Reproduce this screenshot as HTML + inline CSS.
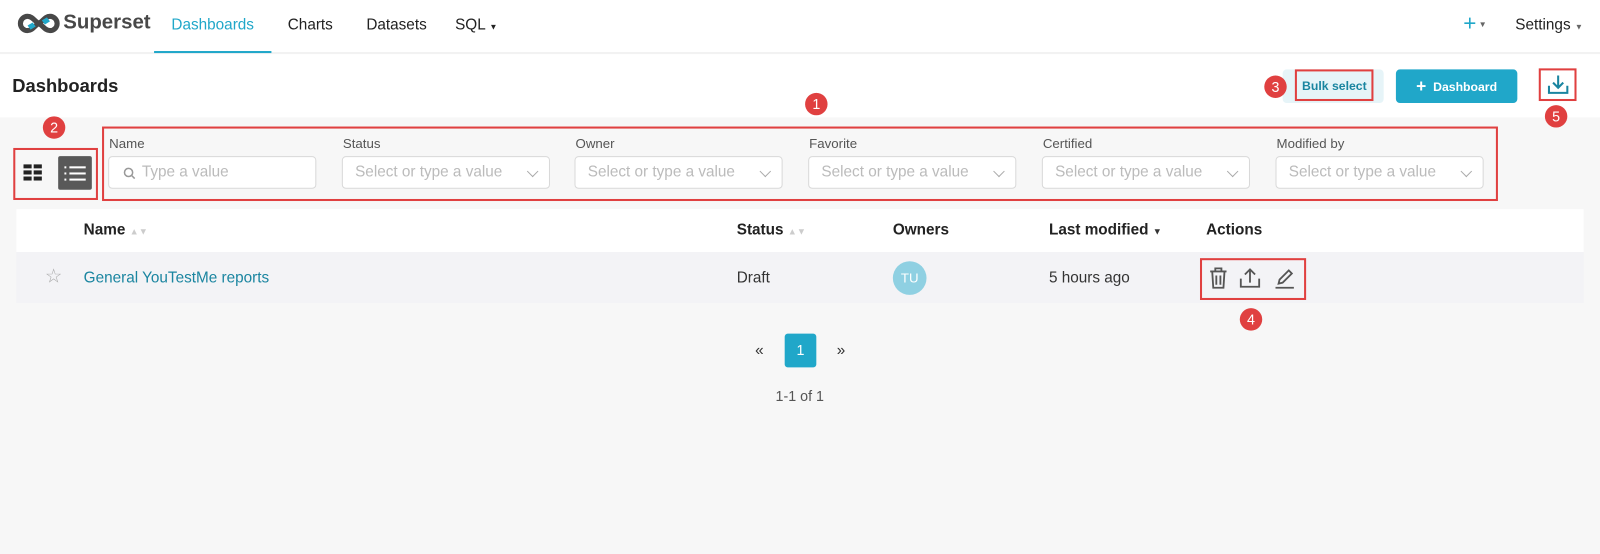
<!DOCTYPE html>
<html><head><meta charset="utf-8"><style>
*{box-sizing:border-box;margin:0;padding:0}
body{width:1600px;height:554px;background:#f7f7f7;font-family:"Liberation Sans",sans-serif;position:relative;overflow:hidden;color:#333}
#w{position:absolute;left:0;top:0;width:1568px;height:543px;transform:scale(1.0204);transform-origin:0 0}
.a{position:absolute}
.red{position:absolute;border:2px solid #e04040}
.num{position:absolute;width:22px;height:22px;border-radius:50%;background:#e04040;color:#fff;font-size:14px;text-align:center;line-height:22px}
.lab{position:absolute;top:133px;font-size:13px;color:#555}
.inp{position:absolute;top:153px;width:204px;height:32px;background:#fff;border:1px solid #d9d9d9;border-radius:4px;font-size:15px;color:#bbb;line-height:30px;padding-left:12px}
.inp .chev{position:absolute;right:12px;top:10px;width:8px;height:8px;border-right:1px solid #aaa;border-bottom:1px solid #aaa;transform:rotate(45deg)}
.th{position:absolute;top:217px;font-size:15px;font-weight:bold;color:#222}
.td{position:absolute;top:264px;font-size:15px;color:#333}
</style></head><body><div id="w">
<div class="a" style="left:0;top:0;width:1600px;height:115px;background:#fff"></div>
<div class="a" style="left:0;top:51px;width:1600px;height:2px;background:#f2f2f2"></div>
<svg class="a" style="left:16px;top:12px" width="44" height="22" viewBox="0 0 44 22"><path d="M11 4a7 7 0 1 0 0 14c5 0 7-5 11-7s6-7 11-7a7 7 0 1 1 0 14c-5 0-7-5-11-7s-6-7-11-7z" fill="none" stroke="#484848" stroke-width="5"/><path d="M25 8l5-3 3 4-5 3z" fill="#20a7c9"/><path d="M19 14l-5 3-3-4 5-3z" fill="#20a7c9"/></svg>
<div class="a" style="left:62px;top:11px;font-size:20px;font-weight:bold;color:#484848">Superset</div>
<div class="a" style="left:168px;top:16px;font-size:15px;color:#20a7c9">Dashboards</div>
<div class="a" style="left:151px;top:50px;width:115px;height:2px;background:#20a7c9"></div>
<div class="a" style="left:282px;top:16px;font-size:15px;color:#222">Charts</div>
<div class="a" style="left:359px;top:16px;font-size:15px;color:#222">Datasets</div>
<div class="a" style="left:446px;top:16px;font-size:15px;color:#222">SQL <span style="font-size:8px">▼</span></div>
<div class="a" style="left:1434px;top:10px;font-size:22px;color:#20a7c9">+<span style="font-size:8px;color:#666;vertical-align:middle"> ▼</span></div>
<div class="a" style="left:1485px;top:16px;font-size:15px;color:#222">Settings <span style="font-size:8px;color:#666">▼</span></div>
<div class="a" style="left:12px;top:74px;font-size:18px;font-weight:bold;color:#222">Dashboards</div>
<div class="a" style="left:1257px;top:68px;width:99px;height:33px;background:#e6f4f8;border-radius:4px"></div>
<div class="red" style="left:1269px;top:68px;width:77px;height:31px"></div>
<div class="a" style="left:1276px;top:77px;font-size:12px;font-weight:bold;color:#1a85a0">Bulk select</div>
<div class="num" style="left:1239px;top:74px">3</div>
<div class="a" style="left:1368px;top:68px;width:119px;height:33px;background:#20a7c9;border-radius:4px;color:#fff;font-size:12px;font-weight:bold;line-height:33px;text-align:center"><span style="font-size:17px;vertical-align:-1px">+</span>&nbsp; Dashboard</div>
<div class="red" style="left:1508px;top:67px;width:37px;height:32px"></div>
<svg class="a" style="left:1515px;top:72px" width="24" height="22" viewBox="0 0 24 22" fill="none" stroke="#1a85a0" stroke-width="2"><path d="M12 2v12M7 9l5 5 5-5M3 12v7h18v-7"/></svg>
<div class="num" style="left:1514px;top:103px">5</div>
<div class="num" style="left:789px;top:91px">1</div>
<div class="num" style="left:42px;top:114px">2</div>
<div class="red" style="left:100px;top:124px;width:1368px;height:73px"></div>
<div class="red" style="left:13px;top:145px;width:83px;height:51px"></div>
<svg class="a" style="left:23px;top:161px" width="20" height="16"><g fill="#222"><rect x="0" y="0" width="8" height="4"/><rect x="10" y="0" width="8" height="4"/><rect x="0" y="6" width="8" height="4"/><rect x="10" y="6" width="8" height="4"/><rect x="0" y="12" width="8" height="4"/><rect x="10" y="12" width="8" height="4"/></g></svg>
<div class="a" style="left:57px;top:153px;width:33px;height:33px;background:#595959;border-radius:2px"></div>
<svg class="a" style="left:63px;top:162px" width="22" height="16"><g fill="#fff"><rect x="0" y="1" width="2" height="2"/><rect x="5" y="1" width="16" height="2"/><rect x="0" y="7" width="2" height="2"/><rect x="5" y="7" width="16" height="2"/><rect x="0" y="13" width="2" height="2"/><rect x="5" y="13" width="16" height="2"/></g></svg>
<div class="lab" style="left:107px">Name</div>
<div class="lab" style="left:336px">Status</div>
<div class="lab" style="left:564px">Owner</div>
<div class="lab" style="left:793px">Favorite</div>
<div class="lab" style="left:1022px">Certified</div>
<div class="lab" style="left:1251px">Modified by</div>
<div class="inp" style="left:106px;padding-left:32px"><svg class="a" style="left:14px;top:10px" width="12" height="12" fill="none" stroke="#999" stroke-width="1.5"><circle cx="5" cy="5" r="4"/><path d="M8 8l3 3"/></svg>Type a value</div>
<div class="inp" style="left:335px">Select or type a value<i class="chev"></i></div>
<div class="inp" style="left:563px">Select or type a value<i class="chev"></i></div>
<div class="inp" style="left:792px">Select or type a value<i class="chev"></i></div>
<div class="inp" style="left:1021px">Select or type a value<i class="chev"></i></div>
<div class="inp" style="left:1250px">Select or type a value<i class="chev"></i></div>
<div class="a" style="left:16px;top:205px;width:1536px;height:42px;background:#fff"></div>
<div class="a" style="left:16px;top:247px;width:1536px;height:50px;background:#f3f3f6"></div>
<div class="th" style="left:82px">Name <span style="color:#ccc;font-size:9px">▲▼</span></div>
<div class="th" style="left:722px">Status <span style="color:#ccc;font-size:9px">▲▼</span></div>
<div class="th" style="left:875px">Owners</div>
<div class="th" style="left:1028px">Last modified <span style="color:#333;font-size:9px">▼</span></div>
<div class="th" style="left:1182px">Actions</div>
<div class="a" style="left:44px;top:260px;font-size:19px;color:#aaa">☆</div>
<div class="td" style="left:82px;color:#1a85a0">General YouTestMe reports</div>
<div class="td" style="left:722px">Draft</div>
<div class="a" style="left:875px;top:256px;width:33px;height:33px;border-radius:50%;background:#8fd0e2;color:#fff;font-size:13px;line-height:33px;text-align:center">TU</div>
<div class="td" style="left:1028px">5 hours ago</div>
<div class="red" style="left:1176px;top:253px;width:104px;height:41px"></div>
<svg class="a" style="left:1183px;top:261px" width="90" height="24" fill="none" stroke="#555" stroke-width="1.8">
<path d="M3 5h16M8 5V2h6v3M5 5l1 16h10l1-16M9 9v9M13 9v9"/>
<path d="M33 12v8h18v-8M42 16V3M37 8l5-5 5 5"/>
<path d="M67 21h18M70 17l1-4 9-9 3 3-9 9z"/>
</svg>
<div class="num" style="left:1215px;top:302px">4</div>
<div class="a" style="left:740px;top:335px;font-size:15px;color:#333">«</div>
<div class="a" style="left:769px;top:327px;width:31px;height:33px;background:#20a7c9;border-radius:3px;color:#fff;font-size:14px;line-height:33px;text-align:center">1</div>
<div class="a" style="left:820px;top:335px;font-size:15px;color:#333">»</div>
<div class="a" style="left:760px;top:380px;font-size:14px;color:#555">1-1 of 1</div>
</div></body></html>
